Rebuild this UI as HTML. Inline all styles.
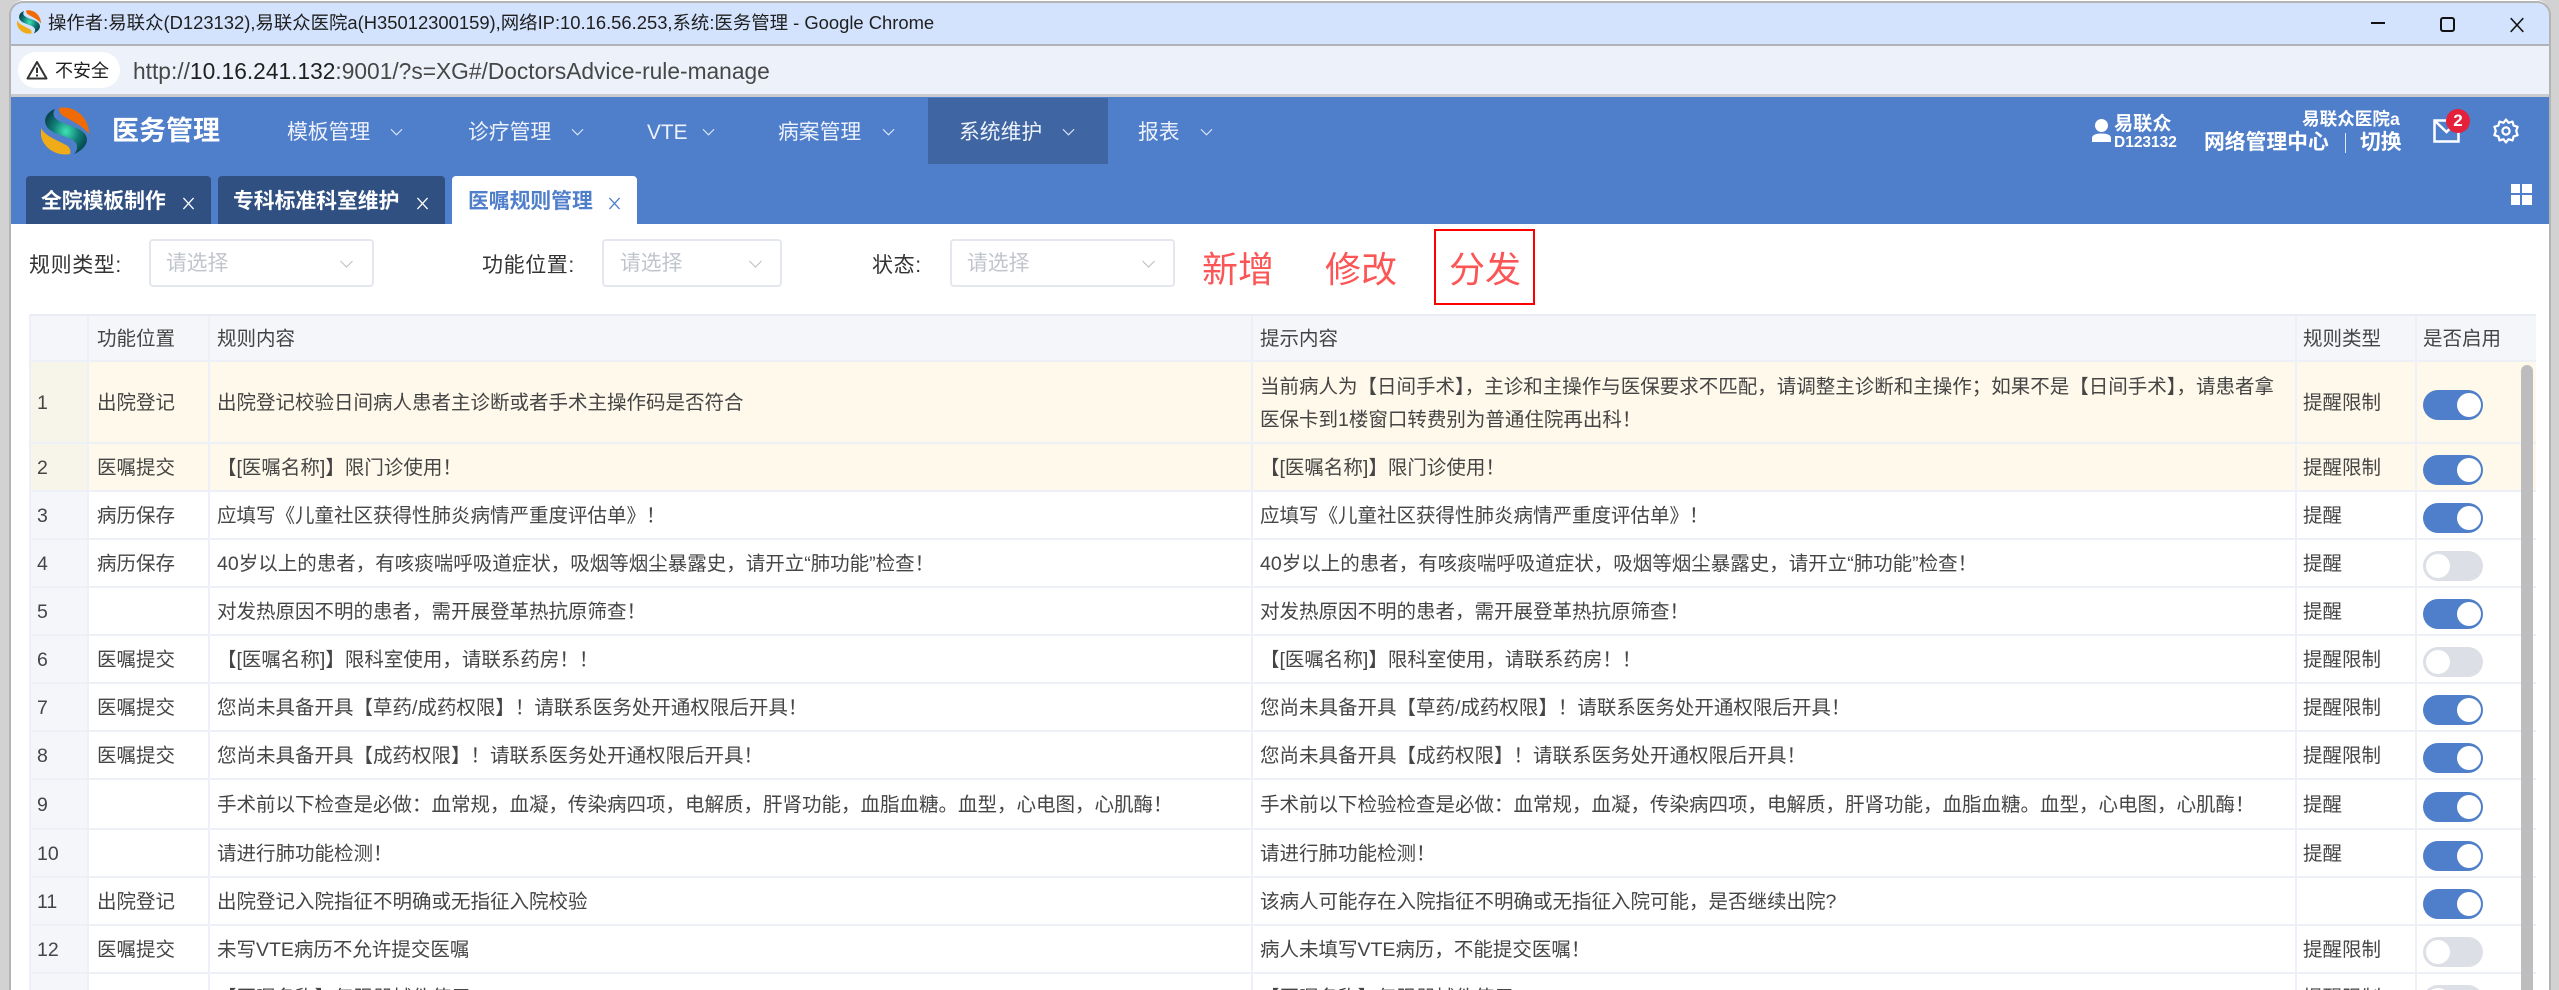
<!DOCTYPE html>
<html lang="zh-CN">
<head>
<meta charset="utf-8">
<title>医务管理</title>
<style>
*{box-sizing:border-box}
html,body{margin:0;padding:0;width:2559px;height:990px;overflow:hidden;background:#d2d2d2;font-family:"Liberation Sans","Noto Sans CJK SC",sans-serif;color:#444}
#root{position:absolute;left:0;top:0;width:2559px;height:990px;overflow:hidden;background:#d2d2d2}
.a{position:absolute;white-space:nowrap;line-height:1}
#win{position:absolute;left:10px;top:0;width:2540px;height:990px;background:#fff;overflow:hidden;border-radius:14px 14px 0 0}
#edge{position:absolute;left:9px;top:1px;width:2542px;height:989px;border:2px solid #b4b4b4;border-bottom:0;border-radius:14px 14px 0 0;pointer-events:none}
.bar{position:absolute;left:10px;width:2540px}
.menu{font-size:20.8px;color:#eef3fb;top:123px}
.tab{position:absolute;top:176px;height:48px;border-radius:4px 4px 0 0;background:#305082}
.tabt{font-size:20.8px;font-weight:700;top:192px;color:#fff}
.lbl{font-size:21px;letter-spacing:.6px;color:#333;top:255px}
.inp{position:absolute;top:239px;height:48px;border:2px solid #e4e7ed;border-radius:4px;background:#fff}
.ph{font-size:20.8px;color:#c0c4cc;top:254px}
.act{font-size:36px;color:#fb5555;top:252px}
.r{position:absolute;left:29px;width:2507px;border-bottom:2px solid #eef0f7;border-left:2px solid #eef0f7;background:#fff;font-size:19.5px;color:#454545}
.r span{position:absolute;top:calc(50% - 9.5px);line-height:20px;white-space:nowrap}
.r i{position:absolute;top:0;bottom:0;width:2px;background:#eef0f7}
.no{position:absolute;left:0;top:0;bottom:0;width:58px;background:#f5f6fa}
.y{background:#fff9eb}
.y .no{background:#f7f5ea}
.c1{left:6px}.c2{left:66px}.c3{left:186px}.c4{left:1229px}.c5{left:2272px}
.v1{left:56px}.v2{left:177px}.v3{left:1220px}.v4{left:2264px}.v5{left:2384px}
.t{position:absolute;left:2392px;top:calc(50% - 12px);width:60px;height:30px;border-radius:15px;background:#4f7ecb}
.t b{position:absolute;right:2px;top:3px;width:24px;height:24px;border-radius:50%;background:#fff}
.t.o{background:#dcdfe6}
.t.o b{right:auto;left:3px}
.h{background:#f5f6fa;color:#444}
</style>
</head>
<body>
<div id="root">
<svg width="0" height="0" style="position:absolute">
<defs>
<radialGradient id="tg" cx="50%" cy="50%" r="55%"><stop offset="0" stop-color="#3fe3b4"/><stop offset=".55" stop-color="#118078"/><stop offset="1" stop-color="#07464f"/></radialGradient>
<symbol id="logo" viewBox="0 0 48 48">
<path d="M18 1C31-2 48 8 48 27C43 20 33 15 24 10C20 8 18 5 18 1Z" fill="#f06a05"/>
<path d="M0 21C4 29 16 33 25 38C29 40 30 44 29 47C14 50-3 38 0 21Z" fill="#f0ac18"/>
<path d="M14 2C3 6 1 17 9 23C17 29 29 29 35 36C37 40 36 44 33 47C45 42 50 32 42 25C34 18 21 18 14 11C12 8 12 5 14 2Z" fill="url(#tg)"/>
</symbol>
<symbol id="chev" viewBox="0 0 14 8"><polyline points="1,1 7,7 13,1" fill="none" stroke="currentColor" stroke-width="1.2"/></symbol>
<symbol id="x" viewBox="0 0 14 14"><path d="M1.5 1L12.5 13M12.5 1L1.5 13" fill="none" stroke="currentColor" stroke-width="1.4"/></symbol>
</defs>
</svg>

<div id="win"></div>

<!-- title bar -->
<div class="bar" style="top:2px;height:44px;background:#d3e3fd;border-bottom:2px solid #b0b3b8;border-radius:12px 12px 0 0"></div>
<svg class="a" style="left:17px;top:10px" width="24" height="24"><use href="#logo"/></svg>
<div class="a" style="left:48px;top:14px;font-size:18.4px;color:#1f1f1f">操作者:易联众(D123132),易联众医院a(H35012300159),网络IP:10.16.56.253,系统:医务管理 - Google Chrome</div>
<div class="a" style="left:2371px;top:22px;width:14px;height:2px;background:#111"></div>
<div class="a" style="left:2440px;top:17px;width:15px;height:15px;border:2px solid #111;border-radius:3px"></div>
<svg class="a" style="left:2509px;top:17px;color:#111" width="16" height="16"><use href="#x"/></svg>

<!-- address bar -->
<div class="bar" style="top:46px;height:51px;background:#edf2fa;border-bottom:3px solid #c9cbce"></div>
<div class="a" style="left:18px;top:52px;width:102px;height:36px;border-radius:18px;background:#fff"></div>
<svg class="a" style="left:26px;top:60px" width="22" height="20" viewBox="0 0 22 20"><path d="M11 2L20.5 18.5H1.5Z" fill="none" stroke="#333" stroke-width="2" stroke-linejoin="round"/><path d="M11 7.5V13M11 14.5V16.5" stroke="#333" stroke-width="2"/></svg>
<div class="a" style="left:55px;top:62px;font-size:18px;color:#1f1f1f">不安全</div>
<div class="a" style="left:133px;top:60px;font-size:22.75px;color:#474747">http://<span style="color:#1f1f1f">10.16.241.132</span>:9001/?s=XG#/DoctorsAdvice-rule-manage</div>

<!-- app header -->
<div class="bar" style="top:97px;height:127px;background:#4f7ecb"></div>
<div class="a" style="left:928px;top:98px;width:180px;height:66px;background:#3f65a2"></div>
<svg class="a" style="left:41px;top:107px" width="48" height="48"><use href="#logo"/></svg>
<div class="a" style="left:112px;top:118px;font-size:27px;font-weight:700;color:#fff">医务管理</div>

<div class="a menu" style="left:287px">模板管理</div>
<svg class="a" style="left:390px;top:128px;color:#dfe8f6" width="13" height="8"><use href="#chev"/></svg>
<div class="a menu" style="left:468px">诊疗管理</div>
<svg class="a" style="left:571px;top:128px;color:#dfe8f6" width="13" height="8"><use href="#chev"/></svg>
<div class="a menu" style="left:647px">VTE</div>
<svg class="a" style="left:702px;top:128px;color:#dfe8f6" width="13" height="8"><use href="#chev"/></svg>
<div class="a menu" style="left:778px">病案管理</div>
<svg class="a" style="left:882px;top:128px;color:#dfe8f6" width="13" height="8"><use href="#chev"/></svg>
<div class="a menu" style="left:959px">系统维护</div>
<svg class="a" style="left:1062px;top:128px;color:#dfe8f6" width="13" height="8"><use href="#chev"/></svg>
<div class="a menu" style="left:1138px">报表</div>
<svg class="a" style="left:1200px;top:128px;color:#dfe8f6" width="13" height="8"><use href="#chev"/></svg>

<!-- user block -->
<svg class="a" style="left:2092px;top:119px" width="19" height="23" viewBox="0 0 19 23"><ellipse cx="9.5" cy="6.5" rx="6.5" ry="6.5" fill="#fff"/><path d="M0 23V19C0 16 4 14.5 9.5 14.5S19 16 19 19V23Z" fill="#fff"/></svg>
<div class="a" style="left:2114px;top:115px;font-size:19.2px;font-weight:700;color:#fff">易联众</div>
<div class="a" style="left:2114px;top:135px;font-size:15.5px;font-weight:700;color:#fff">D123132</div>
<div class="a" style="left:2302px;top:111px;font-size:17.6px;font-weight:700;color:#fff">易联众医院a</div>
<div class="a" style="left:2204px;top:133px;font-size:20.8px;font-weight:700;color:#fff">网络管理中心</div>
<div class="a" style="left:2345px;top:133px;width:1px;height:20px;background:#dfe8f6"></div>
<div class="a" style="left:2360px;top:133px;font-size:20.8px;font-weight:700;color:#fff">切换</div>
<svg class="a" style="left:2433px;top:119px" width="27" height="24" viewBox="0 0 27 24"><path d="M1.5 1.5H25.5V22.5H1.5Z" fill="none" stroke="#fff" stroke-width="2.5"/><path d="M1.5 1.5L13.5 13L25.5 1.5" fill="none" stroke="#fff" stroke-width="2.5"/></svg>
<div class="a" style="left:2446px;top:109px;width:24px;height:24px;border-radius:50%;background:#e5203a;color:#fff;font-size:17px;font-weight:700;text-align:center;line-height:24px">2</div>
<svg class="a" style="left:2493px;top:118px" width="26" height="26" viewBox="0 0 26 26"><path d="M13 1.5L15.5 4.8L19.5 3.6L20.6 7.6L24.6 8.8L23.2 13L24.6 17.2L20.6 18.4L19.5 22.4L15.5 21.2L13 24.5L10.5 21.2L6.5 22.4L5.4 18.4L1.4 17.2L2.8 13L1.4 8.8L5.4 7.6L6.5 3.6L10.5 4.8Z" fill="none" stroke="#fff" stroke-width="2.2" stroke-linejoin="round"/><circle cx="13" cy="13" r="3.6" fill="none" stroke="#fff" stroke-width="2.2"/></svg>

<!-- grid icon -->
<div class="a" style="left:2511px;top:184px;width:9px;height:9px;background:#fff"></div>
<div class="a" style="left:2522px;top:184px;width:10px;height:9px;background:#fff"></div>
<div class="a" style="left:2511px;top:195px;width:9px;height:10px;background:#fff"></div>
<div class="a" style="left:2522px;top:195px;width:10px;height:10px;background:#fff"></div>

<!-- tabs -->
<div class="tab" style="left:26px;width:185px"></div>
<div class="tabt a" style="left:41px">全院模板制作</div>
<svg class="a" style="left:182px;top:197px;color:#fff" width="13" height="13"><use href="#x"/></svg>
<div class="tab" style="left:218px;width:227px"></div>
<div class="tabt a" style="left:233px">专科标准科室维护</div>
<svg class="a" style="left:416px;top:197px;color:#fff" width="13" height="13"><use href="#x"/></svg>
<div class="tab" style="left:452px;width:185px;background:#fff"></div>
<div class="tabt a" style="left:468px;color:#4f7ecb">医嘱规则管理</div>
<svg class="a" style="left:608px;top:197px;color:#4f7ecb" width="13" height="13"><use href="#x"/></svg>

<!-- filters -->
<div class="a lbl" style="left:29px">规则类型:</div>
<div class="inp" style="left:149px;width:225px"></div>
<div class="a ph" style="left:166px">请选择</div>
<svg class="a" style="left:339px;top:260px;color:#c0c4cc" width="15" height="8"><use href="#chev"/></svg>

<div class="a lbl" style="left:482px">功能位置:</div>
<div class="inp" style="left:602px;width:180px"></div>
<div class="a ph" style="left:620px">请选择</div>
<svg class="a" style="left:748px;top:260px;color:#c0c4cc" width="15" height="8"><use href="#chev"/></svg>

<div class="a lbl" style="left:872px">状态:</div>
<div class="inp" style="left:950px;width:225px"></div>
<div class="a ph" style="left:967px">请选择</div>
<svg class="a" style="left:1141px;top:260px;color:#c0c4cc" width="15" height="8"><use href="#chev"/></svg>

<div class="a act" style="left:1202px">新增</div>
<div class="a act" style="left:1325px">修改</div>
<div class="a" style="left:1434px;top:229px;width:101px;height:76px;border:2px solid #f00"></div>
<div class="a act" style="left:1449px">分发</div>

<!-- table -->
<div class="r h" style="top:314px;height:48px;border-top:2px solid #e9ecf4">
<i class="v1"></i><i class="v2"></i><i class="v3"></i><i class="v4"></i><i class="v5"></i>
<span class="c2">功能位置</span><span class="c3">规则内容</span><span class="c4">提示内容</span><span class="c5">规则类型</span><span style="left:2392px">是否启用</span>
</div>

<div class="r y" style="top:362px;height:82px"><div class="no"></div>
<i class="v1"></i><i class="v2"></i><i class="v3"></i><i class="v4"></i><i class="v5"></i>
<span class="c1">1</span><span class="c2">出院登记</span><span class="c3">出院登记校验日间病人患者主诊断或者手术主操作码是否符合</span>
<span class="c4" style="top:14.5px">当前病人为【日间手术】，主诊和主操作与医保要求不匹配，请调整主诊断和主操作；如果不是【日间手术】，请患者拿</span>
<span class="c4" style="top:47.5px">医保卡到1楼窗口转费别为普通住院再出科！</span>
<span class="c5">提醒限制</span><div class="t"><b></b></div></div>

<div class="r y" style="top:444px;height:48px"><div class="no"></div>
<i class="v1"></i><i class="v2"></i><i class="v3"></i><i class="v4"></i><i class="v5"></i>
<span class="c1">2</span><span class="c2">医嘱提交</span><span class="c3">【[医嘱名称]】限门诊使用！</span><span class="c4">【[医嘱名称]】限门诊使用！</span><span class="c5">提醒限制</span><div class="t"><b></b></div></div>

<div class="r" style="top:492px;height:48px"><div class="no"></div>
<i class="v1"></i><i class="v2"></i><i class="v3"></i><i class="v4"></i><i class="v5"></i>
<span class="c1">3</span><span class="c2">病历保存</span><span class="c3">应填写《儿童社区获得性肺炎病情严重度评估单》！</span><span class="c4">应填写《儿童社区获得性肺炎病情严重度评估单》！</span><span class="c5">提醒</span><div class="t"><b></b></div></div>

<div class="r" style="top:540px;height:48px"><div class="no"></div>
<i class="v1"></i><i class="v2"></i><i class="v3"></i><i class="v4"></i><i class="v5"></i>
<span class="c1">4</span><span class="c2">病历保存</span><span class="c3">40岁以上的患者，有咳痰喘呼吸道症状，吸烟等烟尘暴露史，请开立“肺功能”检查！</span><span class="c4">40岁以上的患者，有咳痰喘呼吸道症状，吸烟等烟尘暴露史，请开立“肺功能”检查！</span><span class="c5">提醒</span><div class="t o"><b></b></div></div>

<div class="r" style="top:588px;height:48px"><div class="no"></div>
<i class="v1"></i><i class="v2"></i><i class="v3"></i><i class="v4"></i><i class="v5"></i>
<span class="c1">5</span><span class="c3">对发热原因不明的患者，需开展登革热抗原筛查！</span><span class="c4">对发热原因不明的患者，需开展登革热抗原筛查！</span><span class="c5">提醒</span><div class="t"><b></b></div></div>

<div class="r" style="top:636px;height:48px"><div class="no"></div>
<i class="v1"></i><i class="v2"></i><i class="v3"></i><i class="v4"></i><i class="v5"></i>
<span class="c1">6</span><span class="c2">医嘱提交</span><span class="c3">【[医嘱名称]】限科室使用，请联系药房！！</span><span class="c4">【[医嘱名称]】限科室使用，请联系药房！！</span><span class="c5">提醒限制</span><div class="t o"><b></b></div></div>

<div class="r" style="top:684px;height:48px"><div class="no"></div>
<i class="v1"></i><i class="v2"></i><i class="v3"></i><i class="v4"></i><i class="v5"></i>
<span class="c1">7</span><span class="c2">医嘱提交</span><span class="c3">您尚未具备开具【草药/成药权限】！请联系医务处开通权限后开具！</span><span class="c4">您尚未具备开具【草药/成药权限】！请联系医务处开通权限后开具！</span><span class="c5">提醒限制</span><div class="t"><b></b></div></div>

<div class="r" style="top:732px;height:48px"><div class="no"></div>
<i class="v1"></i><i class="v2"></i><i class="v3"></i><i class="v4"></i><i class="v5"></i>
<span class="c1">8</span><span class="c2">医嘱提交</span><span class="c3">您尚未具备开具【成药权限】！请联系医务处开通权限后开具！</span><span class="c4">您尚未具备开具【成药权限】！请联系医务处开通权限后开具！</span><span class="c5">提醒限制</span><div class="t"><b></b></div></div>

<div class="r" style="top:780px;height:50px"><div class="no"></div>
<i class="v1"></i><i class="v2"></i><i class="v3"></i><i class="v4"></i><i class="v5"></i>
<span class="c1">9</span><span class="c3">手术前以下检查是必做：血常规，血凝，传染病四项，电解质，肝肾功能，血脂血糖。血型，心电图，心肌酶！</span><span class="c4">手术前以下检验检查是必做：血常规，血凝，传染病四项，电解质，肝肾功能，血脂血糖。血型，心电图，心肌酶！</span><span class="c5">提醒</span><div class="t"><b></b></div></div>

<div class="r" style="top:830px;height:48px"><div class="no"></div>
<i class="v1"></i><i class="v2"></i><i class="v3"></i><i class="v4"></i><i class="v5"></i>
<span class="c1">10</span><span class="c3">请进行肺功能检测！</span><span class="c4">请进行肺功能检测！</span><span class="c5">提醒</span><div class="t"><b></b></div></div>

<div class="r" style="top:878px;height:48px"><div class="no"></div>
<i class="v1"></i><i class="v2"></i><i class="v3"></i><i class="v4"></i><i class="v5"></i>
<span class="c1">11</span><span class="c2">出院登记</span><span class="c3">出院登记入院指征不明确或无指征入院校验</span><span class="c4">该病人可能存在入院指征不明确或无指征入院可能，是否继续出院?</span><div class="t"><b></b></div></div>

<div class="r" style="top:926px;height:48px"><div class="no"></div>
<i class="v1"></i><i class="v2"></i><i class="v3"></i><i class="v4"></i><i class="v5"></i>
<span class="c1">12</span><span class="c2">医嘱提交</span><span class="c3">未写VTE病历不允许提交医嘱</span><span class="c4">病人未填写VTE病历，不能提交医嘱！</span><span class="c5">提醒限制</span><div class="t o"><b></b></div></div>

<div class="r" style="top:974px;height:48px"><div class="no"></div>
<i class="v1"></i><i class="v2"></i><i class="v3"></i><i class="v4"></i><i class="v5"></i>
<span class="c1">13</span><span class="c3">【医嘱名称】仅限器械件使用</span><span class="c4">【医嘱名称】仅限器械件使用</span><span class="c5">提醒限制</span><div class="t o"><b></b></div></div>

<!-- scrollbar -->
<div class="a" style="left:2521px;top:365px;width:12px;height:640px;border-radius:6px;background:#bdbdbf"></div>

<!-- window edge -->
<div id="edge"></div>
</div>
</body>
</html>
